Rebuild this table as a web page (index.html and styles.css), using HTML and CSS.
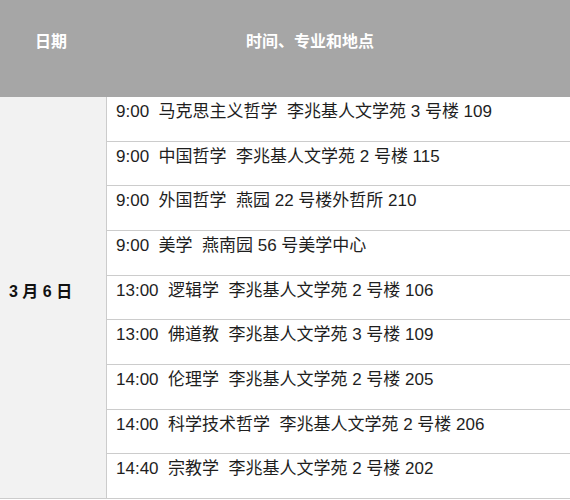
FILE: index.html
```html
<!DOCTYPE html>
<html lang="zh">
<head>
<meta charset="utf-8">
<link rel="stylesheet" href="styles.css">
</head>
<body>
<div class="table">
  <div class="head">
    <div class="h-date">日期</div>
    <div class="h-info">时间、专业和地点</div>
  </div>
  <div class="body">
    <div class="date">3 月 6 日</div>
    <div class="rows">
      <div class="row">9:00&nbsp; 马克思主义哲学&nbsp; 李兆基人文学苑 3 号楼 109</div>
      <div class="row">9:00&nbsp; 中国哲学&nbsp; 李兆基人文学苑 2 号楼 115</div>
      <div class="row">9:00&nbsp; 外国哲学&nbsp; 燕园 22 号楼外哲所 210</div>
      <div class="row">9:00&nbsp; 美学&nbsp; 燕南园 56 号美学中心</div>
      <div class="row">13:00&nbsp; 逻辑学&nbsp; 李兆基人文学苑 2 号楼 106</div>
      <div class="row">13:00&nbsp; 佛道教&nbsp; 李兆基人文学苑 3 号楼 109</div>
      <div class="row">14:00&nbsp; 伦理学&nbsp; 李兆基人文学苑 2 号楼 205</div>
      <div class="row">14:00&nbsp; 科学技术哲学&nbsp; 李兆基人文学苑 2 号楼 206</div>
      <div class="row">14:40&nbsp; 宗教学&nbsp; 李兆基人文学苑 2 号楼 202</div>
    </div>
  </div>
</div>
</body>
</html>
```

FILE: styles.css
```css
html, body {
  margin: 0;
  padding: 0;
  background: #ffffff;
}
body {
  font-family: "Liberation Sans", "Noto Sans CJK SC", sans-serif;
  color: #1e1e1e;
}
.table {
  width: 570px;
}
.head {
  display: grid;
  grid-template-columns: 106px 1fr;
  height: 97px;
  background: #a6a6a6;
  color: #ffffff;
  font-weight: bold;
  font-size: 16px;
}
.h-date {
  padding-top: 28px;
  padding-right: 4px;
  text-align: center;
}
.h-info {
  padding-top: 28px;
  padding-right: 56px;
  text-align: center;
}
.body {
  display: grid;
  grid-template-columns: 106px 1fr;
  border-left: 1px solid #cccccc;
}
.date {
  display: flex;
  align-items: center;
  padding-left: 9px;
  background: #f2f2f2;
  border-right: 1px solid #cccccc;
  border-bottom: 1px solid #cccccc;
  font-weight: bold;
  font-size: 16px;
  color: #111111;
  margin-left: -1px;
  padding-bottom: 14px;
}
.rows {
  display: flex;
  flex-direction: column;
}
.row {
  box-sizing: border-box;
  height: 44.67px;
  padding: 3px 0 0 9px;
  line-height: 24px;
  font-size: 17px;
  border-bottom: 1px solid #cccccc;
  white-space: nowrap;
}
```
